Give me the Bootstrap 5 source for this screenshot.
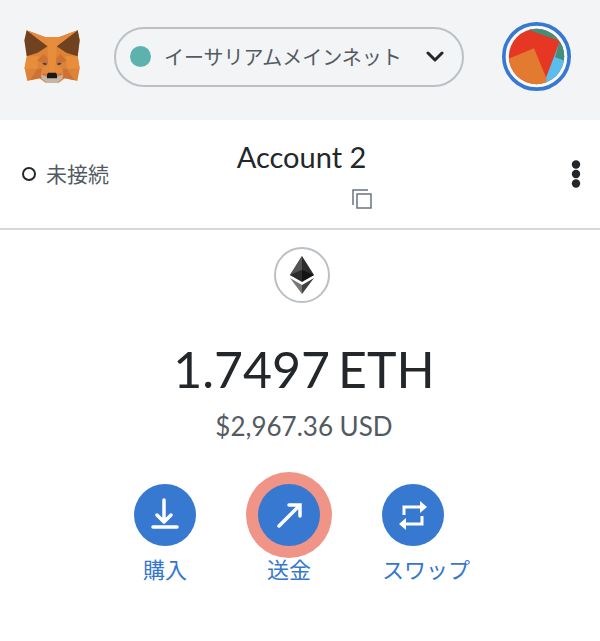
<!DOCTYPE html>
<html lang="ja">
<head>
<meta charset="utf-8">
<meta name="viewport" content="width=device-width, initial-scale=1">
<title>Wallet</title>
<link href="https://cdn.jsdelivr.net/npm/bootstrap@5.3.0/dist/css/bootstrap.min.css" rel="stylesheet">
<style>
body { font-family: Lato, "Noto Sans CJK JP", sans-serif; color: #24272a; background: #fff; }
svg { display: block; flex: none; }
.topbar { background: #f2f4f6; height: 120px; padding: 0 29px 7px 24px; gap: 34px; }
.network { height: 60px; border: 2px solid #bbc0c5; border-radius: 30px; background: none; color: #535a61; padding: 0 18px 0 14px; font-size: 20px; line-height: 32px; }
.network-dot { width: 21px; height: 21px; background: #5cb3ae; margin-right: 13px; flex: none; }
.bare { background: none; border: 0; padding: 0; color: inherit; }
.account-bar { display: grid; grid-template-columns: 1fr auto 1fr; height: 110px; border-bottom: 2px solid #d6d9dc; padding: 0 19px 0 22px; }
.status { color: #535a61; font-size: 21px; line-height: 30px; gap: 10px; }
.status-ring { width: 14px; height: 14px; border: 2px solid #24272a; }
.account-name { font-size: 29px; line-height: 36px; font-weight: 400; }
.copy { color: #6a737d; padding-left: 120px; margin-top: 14px; }
.token { width: 56px; height: 56px; border: 2px solid #bbc0c5; }
.overview { padding: 17px 0 32px 4px; }
.figures { padding-left: 4px; margin-top: 34px; }
.balance { font-size: 50px; line-height: 64px; gap: 8px; }
.fiat { font-size: 26px; line-height: 32px; color: #535a61; margin-top: 9px; }
.actions { gap: 62px; margin-top: 42px; }
.action { color: #3577cf; font-size: 22px; line-height: 32px; gap: 8px; }
.action-icon { width: 62px; height: 62px; background: #3779d0; color: #fff; }
.highlight { box-shadow: 0 0 0 12px #f09488; }
</style>
<script src="https://cdn.jsdelivr.net/npm/bootstrap@5.3.0/dist/js/bootstrap.bundle.min.js"></script>
</head>
<body>
<header class="topbar d-flex align-items-center">
  <svg width="56" height="54" viewBox="42 45 168 162" role="img" aria-label="Fox">
    <path fill="#dc8337" d="M50 46l55 20h43l55-20 6 30-6 48 6 36-7 38-36-9-20 14h-39l-20-14-35 9-8-38 8-36z"/>
    <path fill="#e78d3b" d="M105 66h43l-8 28-4 80h-20l-4-80zM50 124l37-1-5 38H43zM203 124l-37-1 5 38h38z"/>
    <path fill="#70421f" d="M50 46l63 48-30 19-33 11-7-48zM203 46l-63 48 29 19 34 11 6-48z"/>
    <path fill="#e58b3d" d="M50 46l55 20 8 28zM203 46l-55 20-8 28z"/>
    <path fill="#cf7135" d="M81 138l20-21 13 14v16zM171 138l-20-21-12 14v16zM82 161h14l13 16-14 12-35 7zM171 161h-14l-13 16 15 12 34 7z"/>
    <path fill="#e38b3c" d="M96 161l18-14 3 26-24 5zM157 161l-18-14-3 26 24 5z"/>
    <path fill="#c6b6a7" d="M93 178l17 8h32l18-8-3 13-17 13h-28l-17-13z"/>
    <path fill="#34495a" d="M97 143l12 1 1 7-9-2zM155 143l-12 1-1 7 9-2z"/>
    <path fill="#17191b" d="M115 173h22l4 5v12h-30v-12z"/>
  </svg>
  <button type="button" class="network d-flex align-items-center flex-grow-1">
    <span class="network-dot rounded-circle"></span>
    <span class="text-nowrap">イーサリアムメインネット</span>
    <svg class="ms-auto" width="18" height="12" viewBox="0 0 18 12" fill="none" stroke="#24272a" stroke-width="3" stroke-linecap="round" stroke-linejoin="round" aria-hidden="true"><path d="M2 2l7 7 7-7"/></svg>
  </button>
  <button type="button" class="bare ms-1" aria-label="アカウント">
    <svg width="69" height="69" viewBox="36 36 207 207" aria-hidden="true">
      <defs><clipPath id="face"><circle cx="139.500" cy="139.500" r="83"/></clipPath></defs>
      <circle cx="139.500" cy="139.500" r="98" fill="#f7f9fb" stroke="#3779d0" stroke-width="11"/>
      <g clip-path="url(#face)">
        <path fill="#e63624" d="M50 50h180v180H50z"/>
        <path fill="#438f79" d="M106 56l104 37-14 51 50 20V40H106z"/>
        <path fill="#5abeed" d="M210 93l-14 48 50 19v80h-92z"/>
        <path fill="#438f79" d="M210 93l-14 48 50 19V80z"/>
        <path fill="#e27b30" d="M40 153l92-38 38 92-7 30H40z"/>
      </g>
    </svg>
  </button>
</header>
<main>
  <section class="account-bar align-items-center">
    <button type="button" class="bare status d-flex align-items-center"><span class="status-ring rounded-circle"></span>未接続</button>
    <div class="d-flex flex-column align-items-center">
      <h1 class="account-name mb-0">Account 2</h1>
      <button type="button" class="bare copy" aria-label="コピー">
        <svg width="20" height="20" viewBox="0 0 20 20" fill="none" stroke="currentColor" stroke-width="1.500" aria-hidden="true"><path d="M1 16V1h15M5 5h14v14H5z"/></svg>
      </button>
    </div>
    <button type="button" class="bare ms-auto" aria-label="メニュー">
      <svg width="10" height="28" viewBox="0 0 10 28" fill="#24272a" aria-hidden="true"><circle cx="5" cy="4.500" r="4.200"/><circle cx="5" cy="14" r="4.200"/><circle cx="5" cy="23.500" r="4.200"/></svg>
    </button>
  </section>
  <section class="overview d-flex flex-column align-items-center">
    <div class="token rounded-circle d-flex align-items-center justify-content-center">
      <svg width="24" height="38" viewBox="0 0 24 38" role="img" aria-label="Ethereum">
        <path fill="#3b3b3b" d="M12 0v25L0 19z"/><path fill="#2d2d2d" d="M12 0v25l12-6z"/>
        <path fill="#555" d="M12 0v14L0 19z"/><path fill="#141414" d="M12 14v12l12-7z"/><path fill="#2d2d2d" d="M12 14v12L0 19z"/>
        <path fill="#777" d="M0 22l12 7v9z"/><path fill="#414141" d="M24 22l-12 7v9z"/>
      </svg>
    </div>
    <div class="figures d-flex flex-column align-items-center">
      <div class="balance d-flex"><span>1.7497</span><span>ETH</span></div>
      <div class="fiat">$2,967.36 USD</div>
    </div>
    <div class="actions d-flex justify-content-center">
      <button type="button" class="bare action d-flex flex-column align-items-center">
        <span class="action-icon rounded-circle d-flex align-items-center justify-content-center">
          <svg width="30" height="34" viewBox="0 0 30 34" fill="none" stroke="currentColor" stroke-width="3.500" stroke-linecap="round" stroke-linejoin="round" aria-hidden="true"><path d="M14 2v22M7 17l7 7 7-7M3 29h24"/></svg>
        </span>
        <span>購入</span>
      </button>
      <button type="button" class="bare action d-flex flex-column align-items-center">
        <span class="action-icon highlight rounded-circle d-flex align-items-center justify-content-center">
          <svg width="28" height="28" viewBox="0 0 28 28" fill="none" stroke="currentColor" stroke-width="3.500" stroke-linecap="round" aria-hidden="true"><path d="M4 25L24 5M14 4h11v11"/></svg>
        </span>
        <span>送金</span>
      </button>
      <button type="button" class="bare action d-flex flex-column align-items-start">
        <span class="action-icon rounded-circle d-flex align-items-center justify-content-center">
          <svg width="28" height="30" viewBox="0 0 28 30" aria-hidden="true"><path fill="none" stroke="currentColor" stroke-width="3" d="M5 15V7h17M23 16v8H6"/><path fill="currentColor" d="M21 1l7 6-7 6zM7 18l-7 6 7 6z"/></svg>
        </span>
        <span>スワップ</span>
      </button>
    </div>
  </section>
</main>
</body>
</html>
